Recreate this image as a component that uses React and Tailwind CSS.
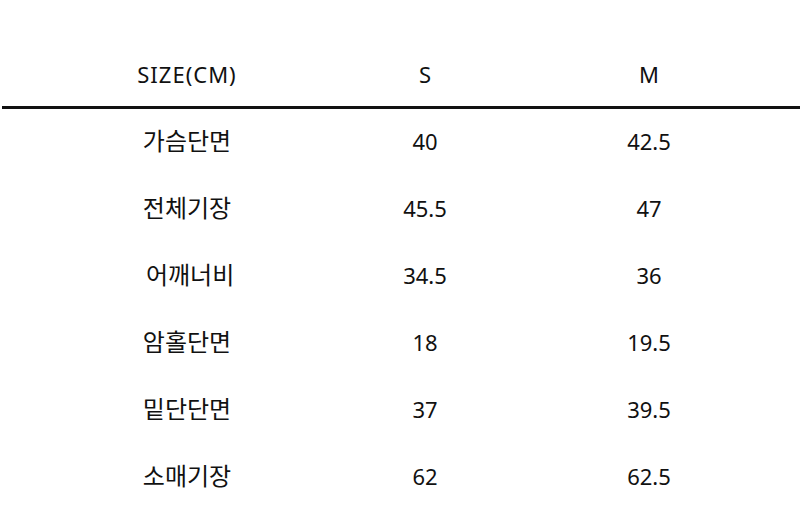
const rows = [
  ["가슴단면", "40", "42.5"],
  ["전체기장", "45.5", "47"],
  [" 어깨너비", "34.5", "36"],
  ["암홀단면", "18", "19.5"],
  ["밑단단면", "37", "39.5"],
  ["소매기장", "62", "62.5"],
];

export default function App() {
  return (
    <div
      className="w-[800px] h-[530px] bg-white text-[#111] overflow-hidden"
      style={{ fontFamily: '"Noto Sans", "Noto Sans CJK KR", sans-serif' }}
    >
      <div className="pt-[42px]">
        <div className="ml-[2px] border-b-[3px] border-[#111]">
          <div className="grid grid-cols-[238px_238px_210px] pl-[66px] h-[64px] items-center text-[22px] leading-none">
            <div className="text-center tracking-[1px]">SIZE(CM)</div>
            <div className="text-center">S</div>
            <div className="text-center">M</div>
          </div>
        </div>
        {rows.map((r) => (
          <div
            key={r[0]}
            className="grid grid-cols-[238px_238px_210px] pl-[68px] h-[67px] items-center text-[22px] leading-none"
          >
            <div className="text-center whitespace-pre text-[24px] -mt-[4px]">{r[0]}</div>
            <div className="text-center -mt-[3px]">{r[1]}</div>
            <div className="text-center -mt-[3px]">{r[2]}</div>
          </div>
        ))}
      </div>
    </div>
  );
}
